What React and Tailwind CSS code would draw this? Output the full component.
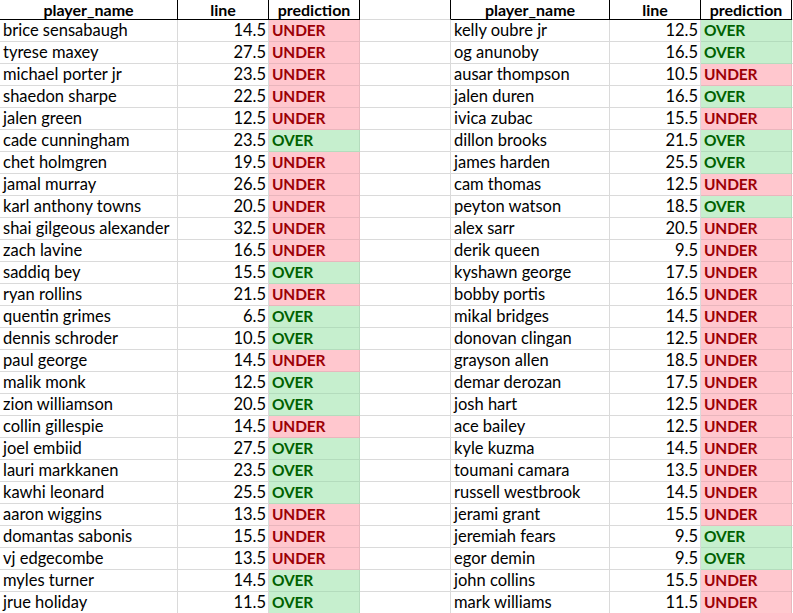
import React from 'react';

const left = [
    ['brice sensabaugh', '14.5', 'UNDER'],
    ['tyrese maxey', '27.5', 'UNDER'],
    ['michael porter jr', '23.5', 'UNDER'],
    ['shaedon sharpe', '22.5', 'UNDER'],
    ['jalen green', '12.5', 'UNDER'],
    ['cade cunningham', '23.5', 'OVER'],
    ['chet holmgren', '19.5', 'UNDER'],
    ['jamal murray', '26.5', 'UNDER'],
    ['karl anthony towns', '20.5', 'UNDER'],
    ['shai gilgeous alexander', '32.5', 'UNDER'],
    ['zach lavine', '16.5', 'UNDER'],
    ['saddiq bey', '15.5', 'OVER'],
    ['ryan rollins', '21.5', 'UNDER'],
    ['quentin grimes', '6.5', 'OVER'],
    ['dennis schroder', '10.5', 'OVER'],
    ['paul george', '14.5', 'UNDER'],
    ['malik monk', '12.5', 'OVER'],
    ['zion williamson', '20.5', 'OVER'],
    ['collin gillespie', '14.5', 'UNDER'],
    ['joel embiid', '27.5', 'OVER'],
    ['lauri markkanen', '23.5', 'OVER'],
    ['kawhi leonard', '25.5', 'OVER'],
    ['aaron wiggins', '13.5', 'UNDER'],
    ['domantas sabonis', '15.5', 'UNDER'],
    ['vj edgecombe', '13.5', 'UNDER'],
    ['myles turner', '14.5', 'OVER'],
    ['jrue holiday', '11.5', 'OVER'],
];

const right = [
    ['kelly oubre jr', '12.5', 'OVER'],
    ['og anunoby', '16.5', 'OVER'],
    ['ausar thompson', '10.5', 'UNDER'],
    ['jalen duren', '16.5', 'OVER'],
    ['ivica zubac', '15.5', 'UNDER'],
    ['dillon brooks', '21.5', 'OVER'],
    ['james harden', '25.5', 'OVER'],
    ['cam thomas', '12.5', 'UNDER'],
    ['peyton watson', '18.5', 'OVER'],
    ['alex sarr', '20.5', 'UNDER'],
    ['derik queen', '9.5', 'UNDER'],
    ['kyshawn george', '17.5', 'UNDER'],
    ['bobby portis', '16.5', 'UNDER'],
    ['mikal bridges', '14.5', 'UNDER'],
    ['donovan clingan', '12.5', 'UNDER'],
    ['grayson allen', '18.5', 'UNDER'],
    ['demar derozan', '17.5', 'UNDER'],
    ['josh hart', '12.5', 'UNDER'],
    ['ace bailey', '12.5', 'UNDER'],
    ['kyle kuzma', '14.5', 'UNDER'],
    ['toumani camara', '13.5', 'UNDER'],
    ['russell westbrook', '14.5', 'UNDER'],
    ['jerami grant', '15.5', 'UNDER'],
    ['jeremiah fears', '9.5', 'OVER'],
    ['egor demin', '9.5', 'OVER'],
    ['john collins', '15.5', 'UNDER'],
    ['mark williams', '11.5', 'UNDER'],
];

const grid = 'grid grid-cols-[178px_91px_91px_91px_159px_91px_91px_1fr]';

// celdas de cabecera con borde negro
const Head = ({ children }) => (
    <div className="h-[20px] border-r border-b border-black text-center font-bold leading-[19px]">
        {children}
    </div>
);

const Pred = ({ value }) => {
    const over = value === 'OVER';
    return (
        <div
            className={
                over
                    ? 'border-r border-b border-[#b4dcbd] bg-[#c6efce] pl-[3px] text-[15.5px] font-bold tracking-[-0.01em] text-[#006100]'
                    : 'border-r border-b border-[#e9b6bd] bg-[#ffc7ce] pl-[3px] text-[15.5px] font-bold tracking-[-0.01em] text-[#9c0006]'
            }
        >
            {value}
        </div>
    );
};

export default function App() {
    return (
        <div
            className="h-[613px] w-[793px] overflow-hidden bg-white text-[16.5px] text-black"
            style={{ fontFamily: 'Lato, "Open Sans", sans-serif' }}
        >
            <div className={`${grid} text-[16px]`}>
                <Head>player_name</Head>
                <Head>line</Head>
                <Head>prediction</Head>
                <div className="h-[20px] border-r border-b border-r-black border-b-[#dadada]" />
                <Head>player_name</Head>
                <Head>line</Head>
                <Head>prediction</Head>
                <div className="h-[20px] border-b border-[#dadada]" />
            </div>
            {left.map((row, i) => {
                const other = right[i];
                return (
                    <div key={i} className={`${grid} h-[22px] leading-[21px]`}>
                        <div className="border-r border-b border-[#dadada] pl-[3px] whitespace-nowrap">{row[0]}</div>
                        <div className="border-r border-b border-[#dadada] pr-[2px] text-right">{row[1]}</div>
                        <Pred value={row[2]} />
                        <div className="border-r border-b border-[#dadada]" />
                        <div className="border-r border-b border-[#dadada] pl-[3px] whitespace-nowrap">{other[0]}</div>
                        <div className="border-r border-b border-[#dadada] pr-[2px] text-right">{other[1]}</div>
                        <Pred value={other[2]} />
                        <div className="border-b border-[#dadada]" />
                    </div>
                );
            })}
        </div>
    );
}
